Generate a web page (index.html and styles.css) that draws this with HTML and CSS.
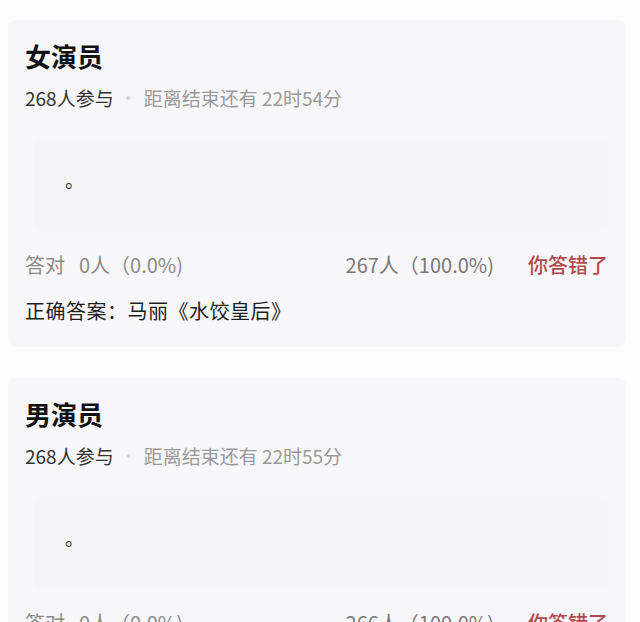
FILE: index.html
```html
<!DOCTYPE html>
<html lang="zh-CN">
<head>
    <meta charset="UTF-8">
    <meta name="viewport" content="width=device-width, initial-scale=1.0">
    <title>竞猜结果</title>
    <link rel="stylesheet" href="styles.css">
</head>
<body>

<div class="list">
    <div class="card">
        <h2 class="title">女演员</h2>
        <div class="meta">
            <span class="count">268人参与</span>
            <span class="dot">·</span>
            <span class="remain">距离结束还有 22时54分</span>
        </div>
        <div class="answer-box">。</div>
        <div class="stats">
            <span class="right">答对<span class="num">0人（0.0%)</span></span>
            <span class="wrong">267人（100.0%)</span>
            <span class="result">你答错了</span>
        </div>
        <div class="correct">正确答案：马丽《水饺皇后》</div>
    </div>

    <div class="card">
        <h2 class="title">男演员</h2>
        <div class="meta">
            <span class="count">268人参与</span>
            <span class="dot">·</span>
            <span class="remain">距离结束还有 22时55分</span>
        </div>
        <div class="answer-box">。</div>
        <div class="stats">
            <span class="right">答对<span class="num">0人（0.0%)</span></span>
            <span class="wrong">266人（100.0%)</span>
            <span class="result">你答错了</span>
        </div>
    </div>
</div>

</body>
</html>
```

FILE: styles.css
```css
body {
    margin: 0;
    background-color: #fdfdfe;
    color: #222;
    font-family: "Noto Sans CJK SC", sans-serif;
    text-spacing-trim: space-all;
}
.list {
    display: flex;
    flex-direction: column;
    gap: 31px;
    padding: 20px 14px 0 8px;
}
.card {
    background-color: #f7f7f9;
    border-radius: 8px;
    padding: 18px 18px 22px 17px;
}
.title {
    margin: 0;
    font-size: 26px;
    line-height: 36px;
    font-weight: 700;
    color: #111;
}
.meta {
    margin-top: 11px;
    font-size: 19px;
    line-height: 26px;
    display: flex;
    align-items: center;
}
.count {
    color: #333;
}
.dot {
    color: #d6d6da;
    margin: 0 6px 0 5px;
}
.remain {
    color: #9a9a9a;
}
/* the user's own answer, left almost blank */
.answer-box {
    margin: 28px 0 0 8px;
    height: 92px;
    background-color: #f5f5f7;
    border-radius: 6px;
    padding: 0 0 0 32px;
    font-size: 19px;
    line-height: 82px;
    color: #333;
}
.stats {
    margin-top: 20px;
    display: flex;
    align-items: center;
    font-size: 20px;
    line-height: 28px;
}
.right {
    color: #8a8a8a;
    flex: 1;
}
.num {
    margin-left: 14px;
}
.wrong {
    color: #777;
}
.result {
    margin-left: 34px;
    color: #b2474f;
    font-size: 20px;
    font-weight: 500;
}
.correct {
    margin-top: 18px;
    font-size: 20px;
    line-height: 28px;
    letter-spacing: 0.5px;
    color: #1e1e1e;
}
```
